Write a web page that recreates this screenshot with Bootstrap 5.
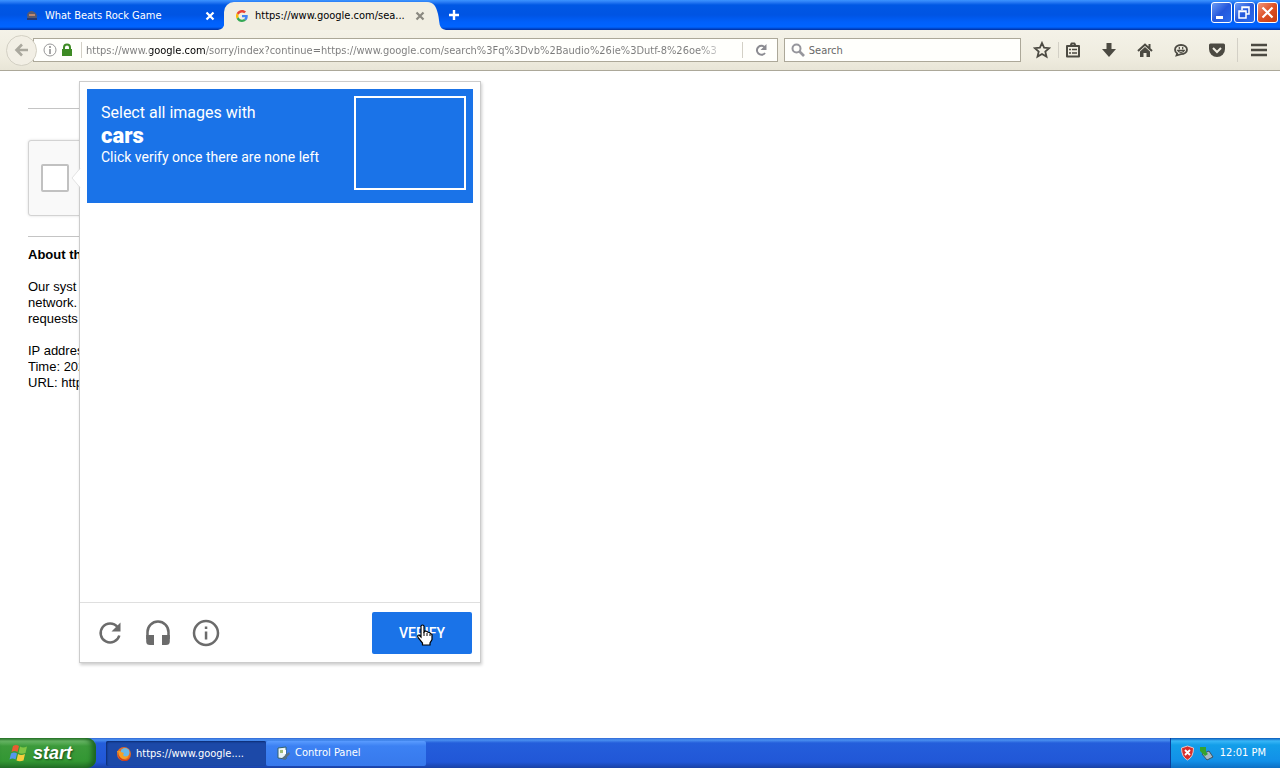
<!DOCTYPE html>
<html lang="en">
<head>
<meta charset="utf-8">
<meta name="viewport" content="width=device-width, initial-scale=1">
<title>https://www.google.com/search</title>
<link href="https://cdn.jsdelivr.net/npm/bootstrap@5.3.0/dist/css/bootstrap.min.css" rel="stylesheet">
<style>
  :root { --ui: Tahoma, "DejaVu Sans Condensed", sans-serif; --chrome: #f1eee2; --line: #aca899; --ink: #4c4a42; --captcha: #1a73e8; }
  body { font: 11px/16px var(--ui); color: #000; background: #fff; }
  svg { display: block; flex: none; }
  button { border: 0; padding: 0; background: none; color: inherit; font: inherit; }

  .titlebar { height: 30px; background: linear-gradient(#3c94ff 0, #2a7df5 2px, #0058e4 5px, #0054e3 15px, #0060fb 22px, #0064ff 27px, #0040c0 29px, #0030a0 30px); }
  .tab-idle { width: 224px; height: 30px; padding: 2px 8px 0 24px; gap: 5px; color: #fff; }
  .tab-open { width: 212px; height: 28px; padding: 0 10px 0 12px; gap: 7px; margin-right: 8px; background: var(--chrome); position: relative; border-radius: 10px 10px 0 0; }
  .tab-open > :not(.tab-edge) { position: relative; }
  .tab-edge { position: absolute; bottom: 0; width: 20px; height: 28px; }
  .tab-edge.before { left: -6px; }
  .tab-edge.after { right: -10px; }
  .window-buttons { gap: 2px; padding: 2px 2px 0 0; }
  .win-btn { width: 21px; height: 21px; border: 1px solid #fff; border-radius: 3px; background: linear-gradient(135deg, #6b9bf5, #2558dc 50%, #2a6ced); }
  .win-btn.close-win { background: linear-gradient(135deg, #f0957b, #dd5024 50%, #c63d12); }

  .toolbar { height: 41px; padding: 0 13px 0 6px; background: linear-gradient(#f4f2e8, #efecdf 70%, #e8e5d7); border-bottom: 1px solid var(--line); }
  .back { width: 31px; height: 31px; border: 1px solid #d3d0c4; border-radius: 50%; background: #f2efe5; position: relative; z-index: 1; place-items: center; }
  .field { height: 24px; background: #fffffc; border: 1px solid var(--line); }
  .address { flex: 723 1 0; margin-left: -4px; padding: 0 10px 0 9px; }
  .searchbox { flex: 223 1 0; margin-left: 6px; padding: 0 6px; }
  .field input { border: 0; outline: 0; padding: 0; background: transparent; font: inherit; min-width: 0; flex: 1; height: 20px; }
  .address input { color: transparent; background: linear-gradient(90deg, #7a7a7a 64px, #000 64px 119px, #7a7a7a 119px 615px, #d8d8d8 633px); -webkit-background-clip: text; background-clip: text; flex: 0 1 633px; }
  .searchbox input::placeholder { color: #686868; opacity: 1; }
  .rule { width: 1px; height: 16px; background: #d3d0c6; flex: none; }
  .tools { padding-left: 12px; color: var(--ink); }
  .tool-row { gap: 20px; margin-left: 6px; }
  .tools .rule { margin-left: 7px; }
  .tools .menu-rule { margin: 0 13px 0 12px; height: 24px; }

  .page-body { font: 13px/16px "Liberation Sans", Arial, sans-serif; }
  .notice { width: 428px; padding: 37px 0 0 28px; white-space: nowrap; }
  .notice hr { margin: 0; border-color: #c4c4c4; opacity: 1; }
  .anchor-box { width: 304px; height: 76px; margin: 31px 0 20px; padding-left: 12px; background: #f9f9f9; border: 1px solid #d3d3d3; border-radius: 3px; box-shadow: 0 0 3px #0002; }
  .anchor-box input { appearance: none; width: 28px; height: 28px; margin: 0; border: 2px solid #c1c1c1; border-radius: 2px; background: #fff; }
  .clip-text { width: 51px; margin-top: 10px; overflow: hidden; }
  .clip-text p, .clip-text h1 { margin: 0 0 16px; font-size: 13px; line-height: 16px; }

  .challenge { position: absolute; left: 79px; top: 10px; width: 402px; height: 582px; background: #fff; border: 1px solid #ccc; box-shadow: 1px 2px 3px #0003; font-family: Roboto, sans-serif; }
  .pointer-notch { position: absolute; left: -9px; top: 85px; }
  .prompt { margin: 7px; height: 114px; padding: 7px 7px 0 14px; background: var(--captcha); color: #fff; }
  .prompt-text { padding-top: 7px; font-size: 14px; line-height: 16px; }
  .prompt-text .ask { font-size: 16px; line-height: 20px; }
  .prompt-text strong { font-size: 22px; line-height: 26px; font-weight: 900; }
  .sample { width: 112px; height: 94px; border: 2px solid #fff; }
  .controls { height: 60px; border-top: 1px solid #dfdfdf; padding: 1px 8px 0 14px; color: #6b6b6b; }
  .icon-btn { width: 32px; height: 32px; display: grid; place-items: center; }
  .verify { width: 100px; height: 42px; border-radius: 2px; background: var(--captcha); color: #fff; font-size: 14px; font-weight: 500; position: relative; }
  .cursor { position: absolute; left: 44px; top: 12px; }

  .taskbar { height: 30px; color: #fff; background: linear-gradient(#3168d5 0, #4a90f0 2px, #245edb 5px, #2157d7 24px, #1941a5 30px); }
  .start { width: 96px; height: 30px; margin-right: 10px; padding-left: 9px; gap: 4px; border-radius: 0 9px 9px 0; background: linear-gradient(#2f7d2e 0, #6bb968 3px, #3c9a3b 8px, #339733 23px, #26752a 30px); box-shadow: inset -4px 0 5px #1c6420; font: italic bold 18px/26px "Liberation Sans", sans-serif; text-shadow: 1px 1px 2px #184a18; }
  .task { width: 160px; height: 25px; padding: 0 10px; gap: 4px; border-radius: 2px; background: linear-gradient(#5a9cff, #3c81f3 5px, #3779ec); }
  .task.current { background: #1c49a8; box-shadow: inset 1px 1px 2px #0b2b70; padding-top: 2px; }
  .tray { width: 110px; height: 30px; padding: 0 14px 0 9px; gap: 3px; border-left: 1px solid #0b3f9c; background: linear-gradient(#0c59b9 0, #38b6f7 3px, #139ee9 7px, #1290e8 23px, #0d6fc4 30px); }
</style>
</head>
<body class="d-flex flex-column vh-100 overflow-hidden">

<header>
  <div class="titlebar d-flex align-items-end">
    <div class="tab-idle d-flex align-items-center">
      <svg width="16" height="16" viewBox="0 0 16 16"><path d="M3 7q1-4 5-4 4 1 5 5l-1 4H4z" fill="#595a6d"/><path d="M5 6h6v2H5z" fill="#bd8770"/><path d="M3 10h10v2H3z" fill="#253a76"/></svg>
      <span class="flex-grow-1">What Beats Rock Game</span>
      <button type="button" aria-label="Close tab"><svg width="12" height="12" viewBox="0 0 12 12"><path d="M2.500 2.500l7 7m0-7l-7 7" stroke="#fff" stroke-width="2.200"/></svg></button>
    </div>
    <div class="tab-open d-flex align-items-center">
      <svg class="tab-edge before" viewBox="0 0 20 28"><path d="M0 28c8-1 6-8 8-16S12 0 20 0v28z" fill="#f1eee2"/></svg>
      <svg class="tab-edge after" viewBox="0 0 20 28"><path d="M20 28c-8-1-6-8-8-16S8 0 0 0v28z" fill="#f1eee2"/></svg>
      <svg width="12" height="12" viewBox="0 0 48 48"><path fill="#ea4335" d="M24 9.5c3.5 0 6.700 1.200 9.200 3.600l6.900-6.900C35.900 2.400 30.500 0 24 0 14.600 0 6.500 5.400 2.600 13.200l8 6.200C12.400 13.700 17.700 9.500 24 9.500z"/><path fill="#4285f4" d="M47 24.500c0-1.600-.2-3.100-.4-4.500H24v9h12.900c-.6 3-2.200 5.500-4.700 7.200l7.700 6C44.400 38 47 31.800 47 24.500z"/><path fill="#fbbc05" d="M10.500 28.600a14 14 0 010-9.200l-8-6.200a24 24 0 000 21.600z"/><path fill="#34a853" d="M24 48c6.500 0 11.900-2.100 15.900-5.800l-7.700-6c-2.200 1.500-4.900 2.300-8.200 2.300-6.300 0-11.600-4.200-13.500-9.900l-8 6.200C6.500 42.600 14.600 48 24 48z"/></svg>
      <span class="flex-grow-1">https://www.google.com/sea...</span>
      <button type="button" aria-label="Close tab"><svg width="12" height="12" viewBox="0 0 12 12"><path d="M2.500 2.500l7 7m0-7l-7 7" stroke="#8a8880" stroke-width="2.200"/></svg></button>
    </div>
    <button type="button" class="align-self-center ms-1" aria-label="New tab"><svg width="12" height="12" viewBox="0 0 12 12"><path d="M6 1v10M1 6h10" stroke="#fff" stroke-width="2.400"/></svg></button>
    <div class="window-buttons ms-auto align-self-start d-flex">
      <button type="button" class="win-btn" aria-label="Minimize"><svg width="19" height="17" viewBox="0 0 19 17"><path d="M4 12h7v3H4z" fill="#fff"/></svg></button>
      <button type="button" class="win-btn" aria-label="Restore"><svg width="19" height="17" viewBox="0 0 19 17" fill="none" stroke="#fff" stroke-width="1.500"><path d="M7 6V3h7v7h-3M7 3.500h7"/><path d="M4 7h7v7H4zM4 7.500h7"/></svg></button>
      <button type="button" class="win-btn close-win" aria-label="Close"><svg width="19" height="17" viewBox="0 0 19 17"><path d="M4.500 3.500l10 10m0-10l-10 10" stroke="#fff" stroke-width="2.200"/></svg></button>
    </div>
  </div>

  <div class="toolbar d-flex align-items-center">
    <button type="button" class="back d-grid" aria-label="Back"><svg width="16" height="16" viewBox="0 0 16 16"><path d="M8 2.500L2.500 8 8 13.500M3 8h11" fill="none" stroke="#aaa89e" stroke-width="2.600"/></svg></button>
    <div class="field address d-flex align-items-center">
      <svg width="14" height="14" viewBox="0 0 14 14"><circle cx="7" cy="7" r="6" fill="none" stroke="#989898"/><path d="M7 3v2M7 6v5" stroke="#898989" stroke-width="1.500"/></svg>
      <svg class="ms-1" width="12" height="14" viewBox="0 0 12 14"><path d="M3 7V4.500a3 3 0 016 0V7" fill="none" stroke="#3e8b24" stroke-width="2"/><path d="M1 6h10v7H1z" fill="#3e8b24"/></svg>
      <span class="rule ms-2 me-1"></span>
      <input type="text" aria-label="Address" value="https://www.google.com/sorry/index?continue=https://www.google.com/search%3Fq%3Dvb%2Baudio%26ie%3Dutf-8%26oe%3">
      <span class="rule ms-auto me-2"></span>
      <button type="button" class="ms-1" aria-label="Reload"><svg width="12" height="12" viewBox="0 0 12 12"><path d="M10 3.500A4.500 4.500 0 1010 9" fill="none" stroke="#8b8b91" stroke-width="2"/><path d="M11.500 0v6h-6z" fill="#8b8b91"/></svg></button>
    </div>
    <div class="field searchbox d-flex align-items-center">
      <svg width="14" height="14" viewBox="0 0 14 14"><circle cx="5.500" cy="5.500" r="4" fill="none" stroke="#96969c" stroke-width="2"/><path d="M8.500 8.500l4.500 4.500" stroke="#96969c" stroke-width="2.600"/></svg>
      <input type="search" class="ms-1" placeholder="Search" aria-label="Search">
    </div>
    <div class="tools d-flex align-items-center flex-shrink-0">
      <button type="button" aria-label="Bookmark"><svg width="18" height="18" viewBox="0 0 18 18"><path d="M9 2l2.100 4.700 5.100.5-3.900 3.400 1.200 5L9 13l-4.500 2.600 1.200-5L1.800 7.200l5.100-.5z" fill="none" stroke="currentColor" stroke-width="1.800"/></svg></button>
      <span class="rule"></span>
      <div class="tool-row d-flex">
        <button type="button" aria-label="Bookmarks list"><svg width="16" height="16" viewBox="0 0 16 16"><path d="M2 4h12v10.500H2zM5.500 4l1-2.500h3l1 2.500" fill="none" stroke="currentColor" stroke-width="2" stroke-linejoin="round"/><path d="M4 7.500h2m1 0h5M4 11h2m1 0h5" stroke="currentColor" stroke-width="1.500"/></svg></button>
        <button type="button" aria-label="Downloads"><svg width="16" height="16" viewBox="0 0 16 16"><path d="M5.500 1h5v6H15l-7 8-7-8h4.500z" fill="currentColor"/></svg></button>
        <button type="button" aria-label="Home"><svg width="16" height="16" viewBox="0 0 16 16"><path d="M1 9l7-6.500L15 9M12.500 2v4" fill="none" stroke="currentColor" stroke-width="2"/><path d="M3 9.500L8 5l5 4.500V15H9.500v-4h-3v4H3z" fill="currentColor"/></svg></button>
        <button type="button" aria-label="Chat"><svg width="16" height="16" viewBox="0 0 16 16"><path d="M8 3c4 0 6 2.300 6 4.700s-2.500 4.500-6 4.500L3.500 13.500l.7-2C2.500 10.500 2 9.500 2 7.700 2 5.300 4 3 8 3z" fill="none" stroke="currentColor" stroke-width="1.800"/><path d="M6.300 5v2.200M9.700 5v2.200M4.500 8.300h7Q10.500 10.300 8 10.300T4.500 8.300z" fill="none" stroke="currentColor" stroke-width="1.200"/></svg></button>
        <button type="button" aria-label="Pocket"><svg width="16" height="16" viewBox="0 0 16 16"><path d="M1.500 1.500h13q1.500 0 1.500 1.500v4a8 8 0 01-16 0V3q0-1.500 1.500-1.500z" fill="currentColor"/><path d="M4 6l4 4 4-4" fill="none" stroke="#f1eee2" stroke-width="2"/></svg></button>
      </div>
      <span class="rule menu-rule"></span>
      <button type="button" aria-label="Menu"><svg width="16" height="16" viewBox="0 0 16 16"><path d="M0 3h16M0 8h16M0 13h16" stroke="currentColor" stroke-width="2.600"/></svg></button>
    </div>
  </div>
</header>

<main class="page-body flex-grow-1 position-relative">
  <div class="notice">
    <hr>
    <div class="anchor-box d-flex align-items-center"><input type="checkbox" aria-label="Verification"></div>
    <hr>
    <div class="clip-text">
      <h1 class="fw-bold">About th</h1>
      <p>Our syst<br>network.<br>requests</p>
      <p>IP addres<br>Time: 202<br>URL: http</p>
    </div>
  </div>

  <section class="challenge d-flex flex-column" aria-label="Challenge">
    <svg class="pointer-notch" width="11" height="22" viewBox="0 0 11 22"><path d="M11 0v22L1 11z" fill="#fff"/><path d="M9 1.500L1 11l8 9.500" fill="none" stroke="#e4e4e4"/></svg>
    <div class="prompt d-flex justify-content-between align-items-start">
      <div class="prompt-text">
        <div class="ask">Select all images with</div>
        <strong class="d-block">cars</strong>
        <div>Click verify once there are none left</div>
      </div>
      <div class="sample"></div>
    </div>
    <div class="controls d-flex align-items-center gap-3 mt-auto">
      <button type="button" class="icon-btn" aria-label="New challenge"><svg width="24" height="24" viewBox="0 0 24 24"><path d="M19.500 6A9.500 9.500 0 1021.300 14.500" fill="none" stroke="currentColor" stroke-width="2.500"/><path d="M22.500 1.500v9H13.500z" fill="currentColor"/></svg></button>
      <button type="button" class="icon-btn" aria-label="Audio challenge"><svg width="26" height="28" viewBox="0 0 26 28"><path d="M2.500 20v-7a10.500 10.500 0 0121 0v7" fill="none" stroke="currentColor" stroke-width="2.500"/><path d="M1.200 16h7.800v10H5q-3.800 0-3.800-3.500zm15.800 0h7.800v6.500q0 3.500-3.800 3.500h-4z" fill="currentColor"/></svg></button>
      <button type="button" class="icon-btn" aria-label="Help"><svg width="28" height="28" viewBox="0 0 28 28"><circle cx="14" cy="14" r="12" fill="none" stroke="currentColor" stroke-width="2.500"/><path d="M12.800 7.500h2.500V10h-2.500zm0 5h2.500v8h-2.500z" fill="currentColor"/></svg></button>
      <button type="button" class="verify ms-auto">VERIFY
        <svg class="cursor" width="18" height="23" viewBox="0 0 18 23"><path d="M5 2q1.500-2 3 0v6l1-1 2 .5 1 .8 1.500.2 1 1 1.500 1v5l-2 3.500V21H6.500v-2L2 13.500Q1 11 3 11l2 2z" fill="#fff" stroke="#000" stroke-width="1.200"/><path d="M8 8v4m3-3v3m3-2v2" stroke="#000"/></svg>
      </button>
    </div>
  </section>
</main>

<footer class="taskbar d-flex align-items-center">
  <button type="button" class="start d-flex align-items-center">
    <svg width="20" height="20" viewBox="0 0 20 20"><path d="M4 3q3-2 6 0L8.500 9q-3-2-6 0z" fill="#e95c32"/><path d="M11 3.500q3 2 7 0L16.500 10q-4 1.500-7 0z" fill="#80c545"/><path d="M2 10.500q3-2 6 0L6.500 16.500q-3-2-6 0z" fill="#5597ee"/><path d="M9 11q3 2 7 0l-1.500 6.500q-4 1.500-7 0z" fill="#f7cd3d"/></svg>
    start
  </button>
  <button type="button" class="task current d-flex align-items-center text-start">
    <svg width="16" height="16" viewBox="0 0 16 16"><circle cx="8" cy="8" r="7" fill="#e56924"/><circle cx="9" cy="6.500" r="4.500" fill="#69b9e8"/><path d="M1 5q3-1 4 1l3 1-1 2q2 3 6 0-1 4-5 4-5 0-7-8z" fill="#f5a126"/><path d="M2 4q0 9 7 10 5 0 6-6-1 8-7 7-7-1-6-11z" fill="#c83b1e"/></svg>
    https://www.google....
  </button>
  <button type="button" class="task d-flex align-items-center text-start">
    <svg width="15" height="15" viewBox="0 0 15 15"><path d="M2 2l8-1v12l-8-1z" fill="#e8f3f6" stroke="#32616f"/><path d="M4 4h3v3H4z" fill="#9ebc78"/><path d="M6 12l7-6 1 2-6 6z" fill="#5a7180"/><path d="M7 3l3 1v4H7z" fill="#fff"/></svg>
    Control Panel
  </button>
  <div class="tray d-flex align-items-center ms-auto">
    <svg width="15" height="16" viewBox="0 0 15 16"><path d="M7.500 1l6 2q0 9-6 12-6-3-6-12z" fill="#d92e2b" stroke="#e9c6c4"/><path d="M5 5l5 5m0-5l-5 5" stroke="#fff" stroke-width="1.800"/></svg>
    <svg width="16" height="16" viewBox="0 0 16 16"><path d="M4 9l7-3 4 6-6 3z" fill="#a8bac5" stroke="#3e5361"/><path d="M2 2h6v5l2 2-3 2-5-5z" fill="#34a32e"/></svg>
    <span class="ms-auto text-nowrap">12:01 PM</span>
  </div>
</footer>

<script src="https://cdn.jsdelivr.net/npm/bootstrap@5.3.0/dist/js/bootstrap.bundle.min.js"></script>
</body>
</html>
